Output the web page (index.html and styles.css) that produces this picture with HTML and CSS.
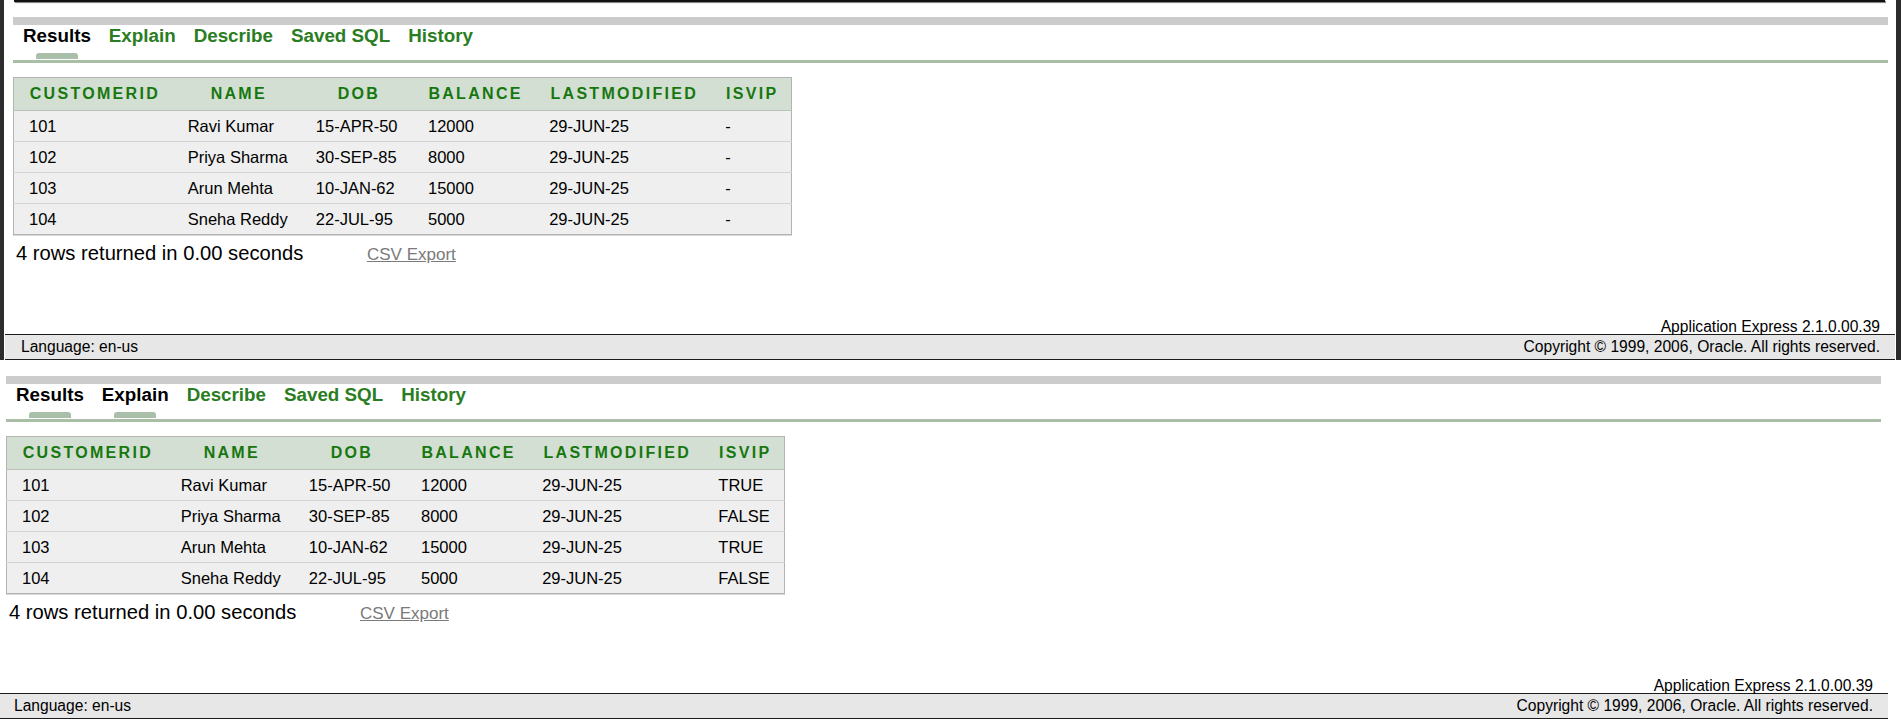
FILE: index.html
```html
<!DOCTYPE html>
<html lang="en">
<head>
<meta charset="utf-8">
<title>SQL Commands - Results</title>
<link rel="stylesheet" href="styles.css">
</head>
<body>
<div class="shot shot--framed">
  <div class="panel">
    <div class="topline"></div>
    <div class="graybar"></div>
    <div class="tabs">
      <div class="tab tab--active"><span class="tab-label">Results</span><span class="tab-mark"></span></div>
      <div class="tab"><span class="tab-label">Explain</span><span class="tab-mark"></span></div>
      <div class="tab"><span class="tab-label">Describe</span><span class="tab-mark"></span></div>
      <div class="tab"><span class="tab-label">Saved SQL</span><span class="tab-mark"></span></div>
      <div class="tab"><span class="tab-label">History</span><span class="tab-mark"></span></div>
    </div>
    <div class="greenline"></div>
    <table class="report">
      <colgroup>
        <col class="c1"><col class="c2"><col class="c3"><col class="c4"><col class="c5"><col class="c6">
      </colgroup>
      <thead>
        <tr><th>CUSTOMERID</th><th>NAME</th><th>DOB</th><th>BALANCE</th><th>LASTMODIFIED</th><th>ISVIP</th></tr>
      </thead>
      <tbody>
        <tr><td>101</td><td>Ravi Kumar</td><td>15-APR-50</td><td>12000</td><td>29-JUN-25</td><td>-</td></tr>
        <tr><td>102</td><td>Priya Sharma</td><td>30-SEP-85</td><td>8000</td><td>29-JUN-25</td><td>-</td></tr>
        <tr><td>103</td><td>Arun Mehta</td><td>10-JAN-62</td><td>15000</td><td>29-JUN-25</td><td>-</td></tr>
        <tr><td>104</td><td>Sneha Reddy</td><td>22-JUL-95</td><td>5000</td><td>29-JUN-25</td><td>-</td></tr>
      </tbody>
    </table>
    <div class="status">
      <span class="count">4 rows returned in 0.00 seconds</span>
      <a class="export" href="#">CSV Export</a>
    </div>
    <div class="foot">
      <div class="version">Application Express 2.1.0.00.39</div>
      <div class="footbar">
        <span>Language: en-us</span>
        <span>Copyright © 1999, 2006, Oracle. All rights reserved.</span>
      </div>
    </div>
  </div>
</div>
<div class="shot shot--plain">
  <div class="panel">
    <div class="topline topline--none"></div>
    <div class="graybar"></div>
    <div class="tabs">
      <div class="tab tab--active"><span class="tab-label">Results</span><span class="tab-mark"></span></div>
      <div class="tab tab--active"><span class="tab-label">Explain</span><span class="tab-mark"></span></div>
      <div class="tab"><span class="tab-label">Describe</span><span class="tab-mark"></span></div>
      <div class="tab"><span class="tab-label">Saved SQL</span><span class="tab-mark"></span></div>
      <div class="tab"><span class="tab-label">History</span><span class="tab-mark"></span></div>
    </div>
    <div class="greenline"></div>
    <table class="report">
      <colgroup>
        <col class="c1"><col class="c2"><col class="c3"><col class="c4"><col class="c5"><col class="c6">
      </colgroup>
      <thead>
        <tr><th>CUSTOMERID</th><th>NAME</th><th>DOB</th><th>BALANCE</th><th>LASTMODIFIED</th><th>ISVIP</th></tr>
      </thead>
      <tbody>
        <tr><td>101</td><td>Ravi Kumar</td><td>15-APR-50</td><td>12000</td><td>29-JUN-25</td><td>TRUE</td></tr>
        <tr><td>102</td><td>Priya Sharma</td><td>30-SEP-85</td><td>8000</td><td>29-JUN-25</td><td>FALSE</td></tr>
        <tr><td>103</td><td>Arun Mehta</td><td>10-JAN-62</td><td>15000</td><td>29-JUN-25</td><td>TRUE</td></tr>
        <tr><td>104</td><td>Sneha Reddy</td><td>22-JUL-95</td><td>5000</td><td>29-JUN-25</td><td>FALSE</td></tr>
      </tbody>
    </table>
    <div class="status">
      <span class="count">4 rows returned in 0.00 seconds</span>
      <a class="export" href="#">CSV Export</a>
    </div>
    <div class="foot">
      <div class="version">Application Express 2.1.0.00.39</div>
      <div class="footbar">
        <span>Language: en-us</span>
        <span>Copyright © 1999, 2006, Oracle. All rights reserved.</span>
      </div>
    </div>
  </div>
</div>
</body>
</html>
```
FILE: styles.css
```css
html, body {
  margin: 0;
  padding: 0;
  background: #ffffff;
}
body {
  width: 1901px;
  height: 719px;
  overflow: hidden;
  font-family: "Liberation Sans", Arial, sans-serif;
  color: #000;
}

.shot {
  display: flex;
  box-sizing: border-box;
  width: 1901px;
}
.shot--framed {
  height: 360px;
  border-left: 4px solid #2c2c2c;
  border-right: 5px solid #2c2c2c;
}
.shot--plain {
  height: 359px;
  margin-left: -3px;
}

.panel {
  display: flex;
  flex-direction: column;
  width: 1892px;
  height: 100%;
  flex: none;
}

.topline {
  height: 2px;
  margin: 0 11px 0 10px;
  background: #111;
  box-shadow: 1px 1px 1px #777;
}
.topline--none {
  height: 1px;
  background: transparent;
  box-shadow: none;
}

.graybar {
  height: 8px;
  margin: 15px 8px 0 9px;
  background: #cccccc;
}

.tabs {
  display: flex;
  gap: 18px;
  height: 35px;
  padding-left: 19px;
}
.tab {
  display: flex;
  flex-direction: column;
  align-items: center;
}
.tab-label {
  font-size: 18.8px;
  line-height: 22px;
  font-weight: bold;
  color: #2a7d22;
  white-space: nowrap;
}
.tab-mark {
  width: 42px;
  height: 6px;
  margin-top: 6px;
  border-radius: 3px 3px 0 0;
  background: transparent;
}
.tab--active .tab-label {
  color: #000;
}
.tab--active .tab-mark {
  background: #a9bfa9;
}

.greenline {
  height: 3px;
  margin: 0 8px 0 9px;
  background: #a8bea5;
}

.report {
  margin: 14px 0 0 9px;
  width: 779px;
  table-layout: fixed;
  border-collapse: collapse;
  border: 1px solid #b3b3b3;
  box-shadow: 0 1px 0 #d9d9d9;
}
.c1 { width: 160px; }
.c2 { width: 128px; }
.c3 { width: 112px; }
.c4 { width: 121px; }
.c5 { width: 176px; }
.c6 { width: 80px; }

.report th {
  height: 32px;
  padding: 0 0 0 2px;
  background: #d3dfd3;
  border-bottom: 1px solid #b8c2b8;
  color: #17770f;
  font-size: 16px;
  font-weight: bold;
  letter-spacing: 2.3px;
  text-align: center;
  white-space: nowrap;
}
.report td {
  height: 30px;
  padding: 0 0 0 14px;
  background: #efefef;
  border-bottom: 1px solid #d2d2d2;
  font-size: 16.5px;
  white-space: nowrap;
}
.report td:first-child {
  padding-left: 15px;
}
.report tr:last-child td {
  border-bottom: none;
}

.status {
  display: flex;
  align-items: baseline;
  margin-top: 6px;
  padding-left: 12px;
  height: 24px;
}
.count {
  width: 351px;
  flex: none;
  font-size: 20.2px;
  line-height: 24px;
  white-space: nowrap;
}
.export {
  font-size: 17px;
  color: #7a7a7a;
  text-decoration: underline;
}

.foot {
  margin-top: auto;
}
.version {
  text-align: right;
  padding-right: 16px;
  font-size: 15.6px;
  line-height: 15px;
  height: 15px;
}
.footbar {
  display: flex;
  justify-content: space-between;
  margin: 0 1px;
  height: 24px;
  padding: 0 15px 0 16px;
  background: #e6e7e6;
  border-top: 1px solid #1c1c1c;
  border-bottom: 1px solid #1c1c1c;
  font-size: 15.6px;
  line-height: 24px;
}
```
